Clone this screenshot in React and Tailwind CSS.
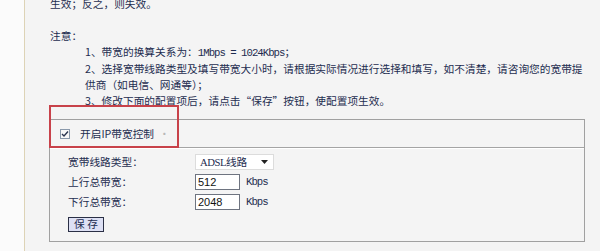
const Mono = ({ children }) => (
  <span className="font-['Liberation_Mono'] tracking-[-1px]">{children}</span>
);

const CheckBox = () => (
  <span className="w-[10px] h-[10px] border border-[#8a99ab] bg-[#f8f8f8] flex items-center justify-center shrink-0">
    <svg width="8" height="8" viewBox="0 0 8 8">
      <path d="M1 4 L3 6 L7 1.5" fill="none" stroke="#2a3550" strokeWidth="1.4" />
    </svg>
  </span>
);

const FormRow = ({ label, children }) => (
  <div className="flex items-center h-[20px] pl-[18px]">
    <span className="w-[127px] shrink-0">{label}</span>
    {children}
  </div>
);

const SpeedInput = ({ value }) => (
  <>
    <span className="w-[45px] h-[16px] border border-[#6e7480] bg-white flex items-center pl-[2px] font-['Liberation_Sans'] text-[11px] text-[#111]">
      {value}
    </span>
    <span className="ml-[6px] font-['Liberation_Mono'] tracking-[-1px]">Kbps</span>
  </>
);

export default function App() {
  return (
    <div className="relative flex w-[600px] h-[251px] overflow-hidden bg-[#f4f4f4] text-[10.7px] leading-[16px] text-[#1e2d50] font-['Noto_Sans_CJK_SC',sans-serif]">
      {/* left gutter */}
      <div className="w-[24px] shrink-0 bg-[#fbfbfb]" />
      <div className="w-px shrink-0 bg-[#ddd3b6]" />

      <div className="flex-1 flex flex-col whitespace-nowrap">
        <p className="mt-[-4px] pl-[25px]">生效；反之，则失效。</p>
        <p className="mt-[16px] pl-[25px]">注意：</p>
        <div className="pl-[60px]">
          <p>
            1、带宽的换算关系为：<Mono>1Mbps = 1024Kbps</Mono>；
          </p>
          <p>2、选择宽带线路类型及填写带宽大小时，请根据实际情况进行选择和填写，如不清楚，请咨询您的宽带提</p>
          <p>供商（如电信、网通等）；</p>
          <p>3、修改下面的配置项后，请点击“保存”按钮，使配置项生效。</p>
        </div>

        {/* settings panel */}
        <div className="mt-[10px] ml-[24px] w-[536px] border border-[#a0a0a0] pb-[9px]">
          <div className="flex items-center h-[28px] pl-[10px] border-b border-[#a4a4a4]">
            <CheckBox />
            <span className="ml-[10px]">开启IP带宽控制</span>
            <span className="ml-[5px] text-[#b8b8b8]">·</span>
          </div>
          <div className="h-px bg-white" />
          <div className="pt-[3px]">
            <FormRow label="宽带线路类型：">
              <span className="w-[79px] h-[16px] border border-[#dcdcdc] bg-white flex items-center justify-between pl-[4px] pr-[5px]">
                <span>
                  <span className="font-['Liberation_Serif'] tracking-[-0.5px]">ADSL</span>线路
                </span>
                <svg width="7" height="4" viewBox="0 0 7 4">
                  <path d="M0 0 H7 L3.5 4 Z" fill="#222" />
                </svg>
              </span>
            </FormRow>
            <FormRow label="上行总带宽：">
              <SpeedInput value="512" />
            </FormRow>
            <FormRow label="下行总带宽：">
              <SpeedInput value="2048" />
            </FormRow>
            <div className="pl-[18px] mt-[5px]">
              <button className="w-[36px] h-[15px] border border-[#2a2f45] bg-[#dde0f4] flex items-center justify-center text-[#1e2d50] leading-none">
                保&nbsp;存
              </button>
            </div>
          </div>
        </div>
      </div>

      {/* red annotation box */}
      <div className="absolute left-[49px] top-[105px] w-[130px] h-[43px] border-2 border-[#c8424a]" />
    </div>
  );
}
